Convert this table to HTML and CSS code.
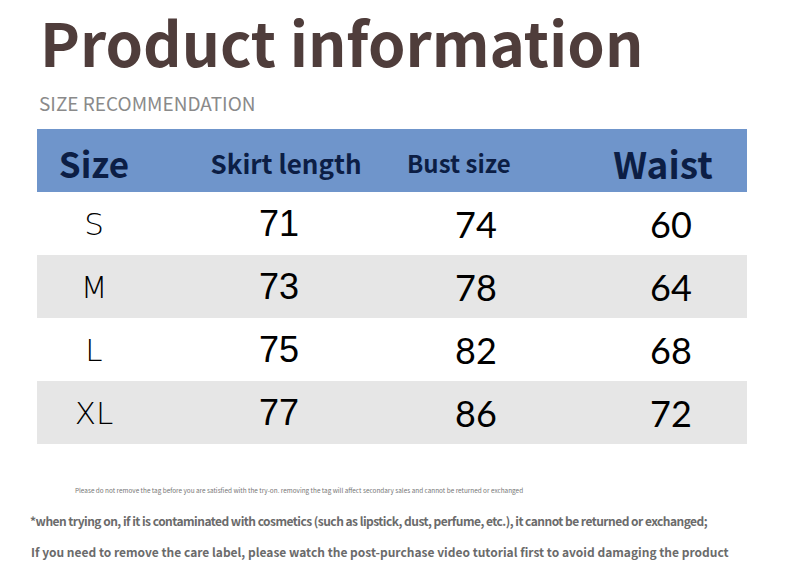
FILE: index.html
```html
<!DOCTYPE html>
<html>
<head>
<meta charset="utf-8">
<link rel="stylesheet" href="styles.css">
</head>
<body>
<div class="page">
  <h1 class="title">Product information</h1>
  <div class="subtitle">SIZE RECOMMENDATION</div>
  <div class="table">
    <div class="row head">
      <div class="c1 h-size">Size</div>
      <div class="c2 h-mid">Skirt length</div>
      <div class="c3 h-small">Bust size</div>
      <div class="c4 h-waist">Waist</div>
    </div>
    <div class="row data">
      <div class="c1 sz">S</div><div class="c2 n1">71</div><div class="c3 n2">74</div><div class="c4 n2">60</div>
    </div>
    <div class="row data alt">
      <div class="c1 sz">M</div><div class="c2 n1">73</div><div class="c3 n2">78</div><div class="c4 n2">64</div>
    </div>
    <div class="row data">
      <div class="c1 sz">L</div><div class="c2 n1">75</div><div class="c3 n2">82</div><div class="c4 n2">68</div>
    </div>
    <div class="row data alt">
      <div class="c1 sz">XL</div><div class="c2 n1">77</div><div class="c3 n2">86</div><div class="c4 n2">72</div>
    </div>
  </div>
  <div class="notes">
    <p class="tiny">Please do not remove the tag before you are satisfied with the try-on. removing the tag will affect secondary sales and cannot be returned or exchanged</p>
    <p class="note n-a">*when trying on, if it is contaminated with cosmetics (such as lipstick, dust, perfume, etc.), it cannot be returned or exchanged;</p>
    <p class="note n-b">If you need to remove the care label, please watch the post-purchase video tutorial first to avoid damaging the product</p>
  </div>
</div>
</body>
</html>
```

FILE: styles.css
```css
html, body {
  margin: 0;
  padding: 0;
  background: #ffffff;
}
.page {
  width: 790px;
  padding-top: 5px;
  font-family: "Noto Sans CJK SC", "Noto Sans", sans-serif;
}
.title {
  margin: 0 0 0 40px;
  font-size: 60px;
  line-height: 72px;
  font-weight: 700;
  color: #4f3d3b;
  white-space: nowrap;
}
.subtitle {
  margin: 16px 0 0 39px;
  font-size: 19px;
  line-height: 1;
  color: #8a8a8a;
}
.table {
  margin: 17px 0 0 37px;
  width: 710px;
}
.row {
  display: grid;
  grid-template-columns: 114px 256px 138px 202px;
  height: 63px;
  align-items: center;
  text-align: center;
  white-space: nowrap;
}
.head {
  background: #6f95cb;
  color: #0c1e45;
  font-weight: 700;
  box-sizing: border-box;
  padding-top: 4px;
}
.alt {
  background: #e6e6e6;
}
.h-size { font-size: 35px; }
.h-waist { font-size: 37px; }
.h-mid { font-size: 26px; }
.h-small { font-size: 24px; }
.head .c2 { padding-left: 14px; }
.head .c3 { padding-right: 38px; }
.head .c4 { padding-left: 34px; }
.data .c4 { padding-left: 50px; }
.data { color: #000; }
.sz {
  font-family: "DejaVu Sans", sans-serif;
  font-weight: 200;
  font-size: 31px;
}
.n1 {
  font-family: "Liberation Sans", Arial, sans-serif;
  font-size: 36px;
}
.n2 {
  font-family: "Lato", "Noto Sans", sans-serif;
  font-size: 36px;
}
.notes {
  margin-top: 42px;
  color: #6b6b6b;
}
.notes p { margin: 0; white-space: nowrap; }
.tiny {
  margin-left: 75px !important;
  font-size: 6.4px;
  line-height: 10px;
  color: #777;
}
.note {
  font-weight: 700;
  font-size: 12px;
  line-height: 16px;
}
.n-a { margin: 17px 0 0 30px !important; letter-spacing: -0.53px; }
.n-b { margin: 15px 0 0 31px !important; letter-spacing: 0; }
```
